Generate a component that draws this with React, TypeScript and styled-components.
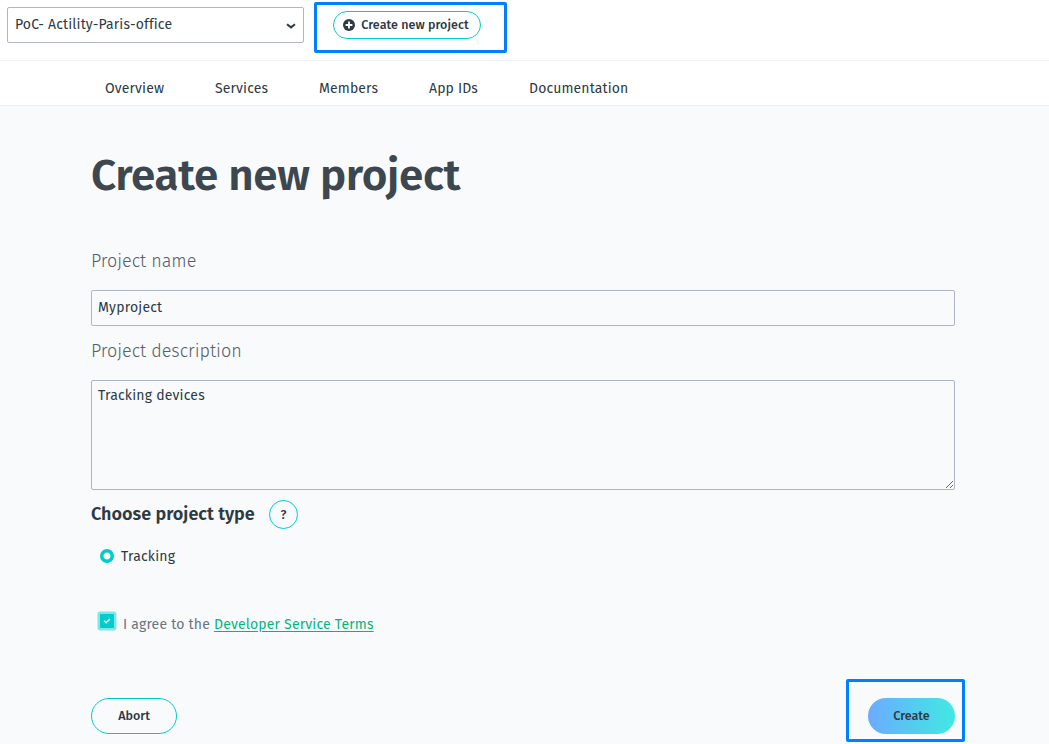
import React from "react";
import styled, { createGlobalStyle } from "styled-components";

const Global = createGlobalStyle`
  * { box-sizing: border-box; }
  body {
    margin: 0;
    background: #f9fafc;
    color: #2d3a45;
    font-family: "Fira Sans", "Noto Sans", sans-serif;
    font-size: 14px;
    overflow: hidden;
  }
  button, input, textarea { font-family: inherit; color: inherit; }
`;

const Page = styled.div`
  height: 744px;
  display: flex;
  flex-direction: column;
`;

const TopBar = styled.header`
  display: flex;
  align-items: flex-start;
  height: 61px;
  padding: 2px 0 0 7px;
  background: #fff;
  border-bottom: 1px solid #eff1f4;
`;

const ProjectSelect = styled.div`
  display: flex;
  justify-content: space-between;
  width: 297px;
  height: 36px;
  margin-top: 5px;
  padding: 0 7px;
  border: 1px solid #adb5c6;
  border-radius: 2px;
  line-height: 34px;
  svg { margin-top: 13px; }
`;

const Label = styled.span<{ $spacing?: number }>`
  letter-spacing: ${(p) => p.$spacing ?? 0.2}px;
  white-space: nowrap;
`;

const Highlight = styled.div<{ $place: "top" | "bottom" }>`
  border: 3px solid #0080ff;
  border-radius: 2px;
  ${(p) =>
    p.$place === "top"
      ? "width: 193px; height: 51px; margin-left: 10px; padding: 6px 0 0 16px;"
      : "width: 119px; height: 63px; margin-right: -10px; padding: 16px 0 0 19px;"}
`;

const PillButton = styled.button<{ $small?: boolean; $primary?: boolean }>`
  display: flex;
  align-items: center;
  justify-content: center;
  gap: 6px;
  width: ${(p) => (p.$small ? 148 : p.$primary ? 87 : 86)}px;
  height: ${(p) => (p.$small ? 28 : 36)}px;
  padding: 0 ${(p) => (p.$small ? 2 : 0)}px 1px 0;
  border: ${(p) => (p.$primary ? "0" : "1px solid #00cccc")};
  border-radius: 18px;
  background: ${(p) => (p.$primary ? "linear-gradient(90deg, #6cabff, #40e9e2)" : "transparent")};
  font-size: 12.5px;
  font-weight: 500;
`;

const Nav = styled.nav`
  display: flex;
  height: 45px;
  padding-left: 105px;
  background: #fff;
  border-bottom: 1px solid #eff1f4;
  line-height: 55px;
`;

const NavItem = styled.a<{ $width: number }>`
  width: ${(p) => p.$width}px;
  letter-spacing: 0.13px;
  white-space: nowrap;
`;

const Content = styled.main`
  width: 955px;
  padding-left: 91px;
  display: flex;
  flex-direction: column;
`;

const Title = styled.h1`
  margin: 38px 0 0;
  height: 64px;
  line-height: 64px;
  font-size: 44px;
  font-weight: 600;
  letter-spacing: -0.33px;
  color: #3d474f;
  white-space: nowrap;
`;

const FieldLabel = styled.label<{ $top: number }>`
  margin-top: ${(p) => p.$top}px;
  height: 24px;
  line-height: 24px;
  font-size: 18px;
  font-weight: 300;
  letter-spacing: -0.03px;
  color: #55606a;
`;

const TextInput = styled.input`
  height: 36px;
  margin-top: 17px;
  padding: 0 6px 2px;
  border: 1px solid #adb5c6;
  border-radius: 2px;
  background: transparent;
  font-size: 14px;
  letter-spacing: 0.2px;
`;

const TextArea = styled.textarea`
  height: 110px;
  margin-top: 17px;
  padding: 5px 6px 3px;
  border: 1px solid #adb5c6;
  border-radius: 2px;
  background: transparent;
  font-size: 14px;
  line-height: 20px;
  letter-spacing: 0.2px;
  resize: both;
`;

const TypeHeading = styled.div`
  display: flex;
  align-items: center;
  gap: 15px;
  height: 29px;
  margin-top: 10px;
`;

const Subtitle = styled.h2`
  margin: 0;
  width: 163px;
  font-size: 18px;
  line-height: 27px;
  font-weight: 600;
  white-space: nowrap;
`;

const HelpButton = styled.button`
  width: 29px;
  height: 29px;
  padding: 0;
  border: 1px solid #00cccc;
  border-radius: 50%;
  background: transparent;
  font-size: 12.5px;
  font-weight: 500;
`;

const OptionRow = styled.div`
  display: flex;
  align-items: center;
  gap: 7px;
  height: 20px;
  margin: 17px 0 0 9px;
`;

const RadioMark = styled.span`
  width: 14px;
  height: 14px;
  border-radius: 50%;
  background: radial-gradient(circle, #fff 3px, #00cccc 3.9px);
`;

const AgreeRow = styled.div`
  display: flex;
  height: 24px;
  margin: 45px 0 0 7px;
  line-height: 28px;
  color: #6a747c;
`;

const CheckMark = styled.span`
  display: flex;
  align-items: center;
  justify-content: center;
  width: 14px;
  height: 14px;
  margin: 3px 9px 0 2px;
  background: #00cccc;
  box-shadow: 0 0 0 2.5px #80e5e5;
  border-radius: 1px;
`;

const TermsLink = styled.a`
  margin-left: 4px;
  color: #00b87c;
  letter-spacing: 0.18px;
  text-decoration: underline;
  text-underline-offset: 2px;
  white-space: nowrap;
`;

const Actions = styled.div`
  display: flex;
  justify-content: space-between;
  align-items: center;
  height: 63px;
  margin-top: 44px;
  > button { margin-top: 11px; }
`;

const NAV = [
  { name: "Overview", width: 110 },
  { name: "Services", width: 104 },
  { name: "Members", width: 110 },
  { name: "App IDs", width: 100 },
  { name: "Documentation", width: 110 },
];

export default function App() {
  return (
    <Page>
      <Global />
      <TopBar>
        <ProjectSelect>
          <Label $spacing={0.15}>PoC- Actility-Paris-office</Label>
          <svg width="10" height="10" viewBox="0 0 10 10" fill="none">
            <path d="M1 3.2 L5 6.4 L9 3.2" stroke="#2d3a45" strokeWidth="2" />
          </svg>
        </ProjectSelect>
        <Highlight $place="top">
          <PillButton $small>
            <svg width="12" height="12" viewBox="0 0 12 12">
              <circle cx="6" cy="6" r="6" fill="#2d3a45" />
              <path d="M6 2.6v6.8M2.6 6h6.8" stroke="#fff" strokeWidth="1.8" />
            </svg>
            <Label $spacing={0.07}>Create new project</Label>
          </PillButton>
        </Highlight>
      </TopBar>
      <Nav>
        {NAV.map((n) => (
          <NavItem key={n.name} $width={n.width}>
            {n.name}
          </NavItem>
        ))}
      </Nav>
      <Content>
        <Title>Create new project</Title>
        <FieldLabel $top={41}>Project name</FieldLabel>
        <TextInput defaultValue="Myproject" />
        <FieldLabel $top={13}>Project description</FieldLabel>
        <TextArea defaultValue="Tracking devices" />
        <TypeHeading>
          <Subtitle>Choose project type</Subtitle>
          <HelpButton>?</HelpButton>
        </TypeHeading>
        <OptionRow>
          <RadioMark />
          <Label>Tracking</Label>
        </OptionRow>
        <AgreeRow>
          <CheckMark>
            <svg width="8" height="6" viewBox="0 0 8 6" fill="none">
              <path d="M1 2.8 L3.1 4.8 L7 1" stroke="#fff" strokeWidth="1.3" />
            </svg>
          </CheckMark>
          <Label>I agree to the</Label>
          <TermsLink>Developer Service Terms</TermsLink>
        </AgreeRow>
        <Actions>
          <PillButton>
            <Label $spacing={0}>Abort</Label>
          </PillButton>
          <Highlight $place="bottom">
            <PillButton $primary>
              <Label $spacing={0}>Create</Label>
            </PillButton>
          </Highlight>
        </Actions>
      </Content>
    </Page>
  );
}
